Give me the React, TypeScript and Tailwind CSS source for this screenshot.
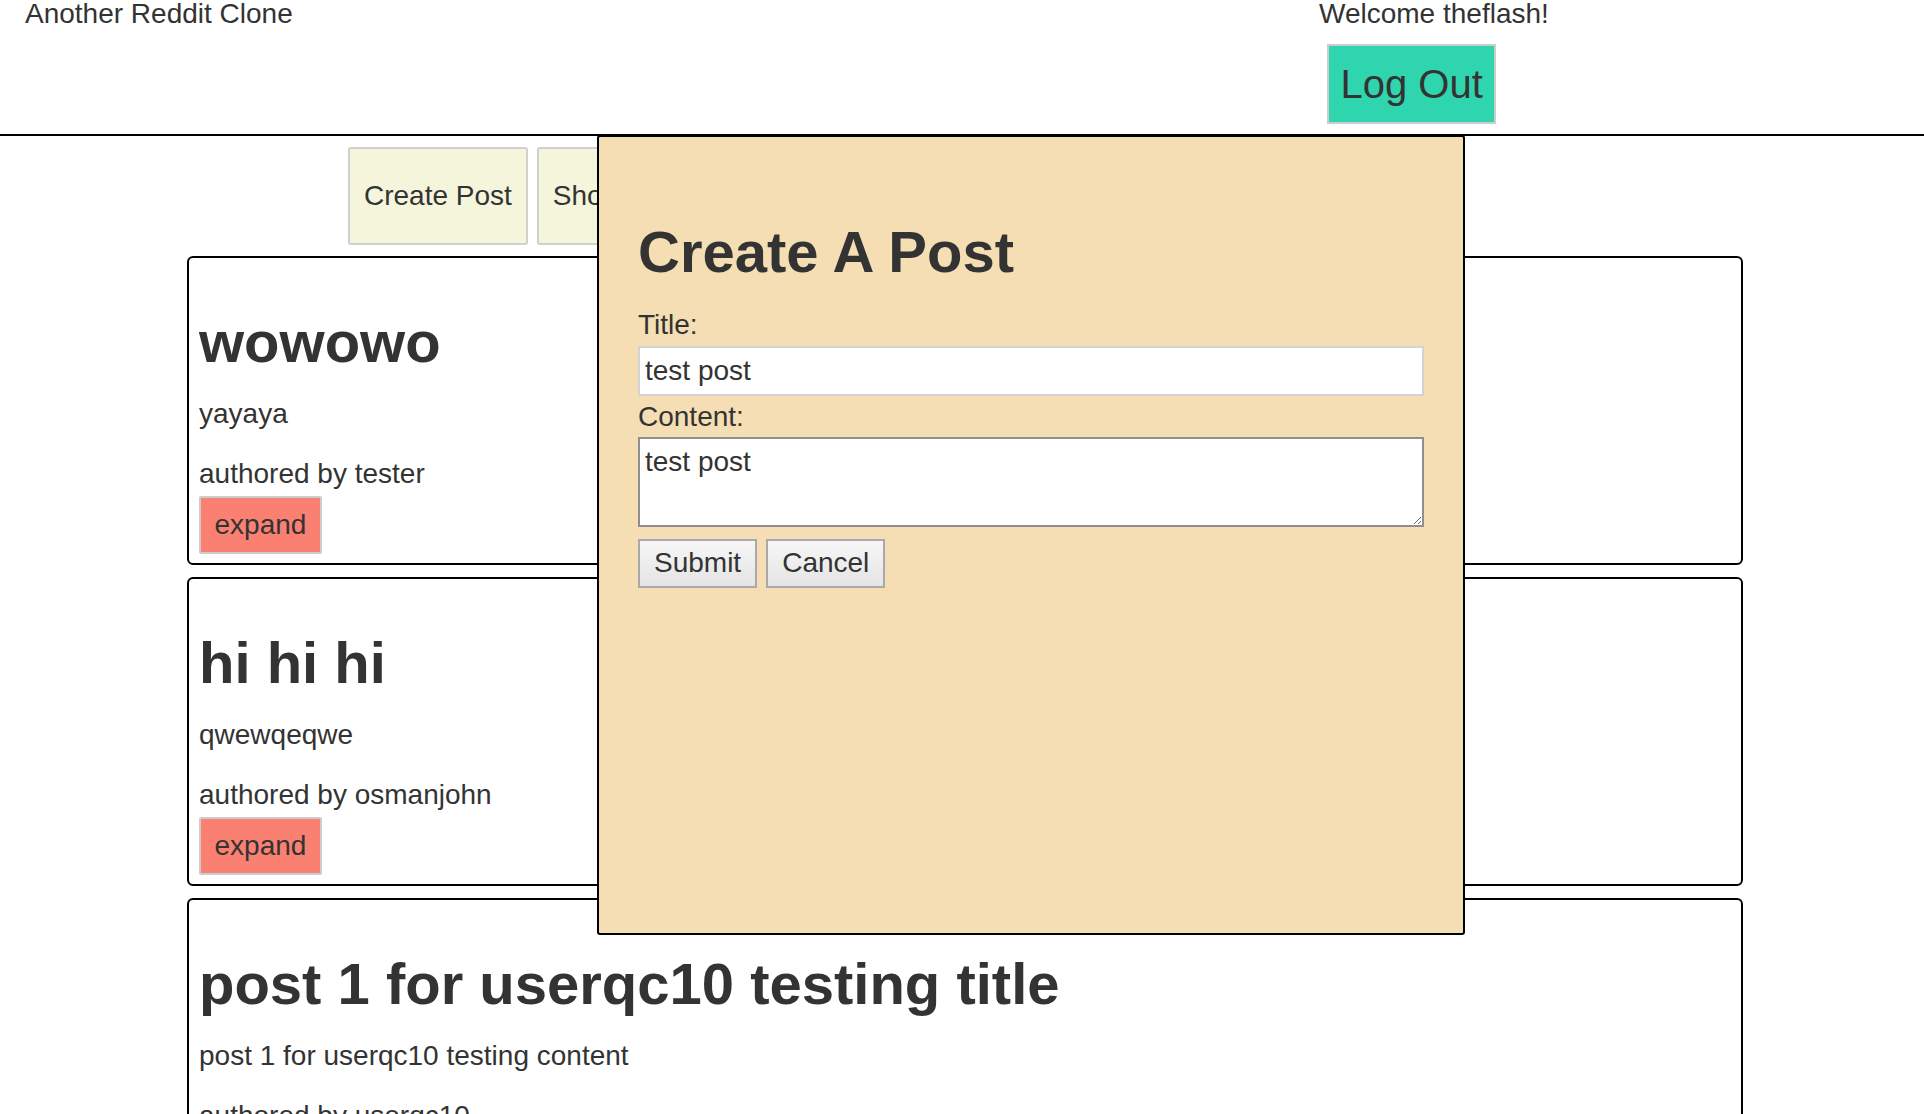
type Post = { title: string; content: string; author: string }

const posts: Post[] = [
  { title: 'wowowo', content: 'yayaya', author: 'tester' },
  { title: 'hi hi hi', content: 'qwewqeqwe', author: 'osmanjohn' },
  {
    title: 'post 1 for userqc10 testing title',
    content: 'post 1 for userqc10 testing content',
    author: 'userqc10',
  },
]

function PostCard({ post }: { post: Post }) {
  return (
    <div className="rounded-[6px] border-2 border-black px-[10px] pt-[10px] pb-[9px]">
      <h1 className="mt-[42px] text-[58px] leading-[64px] font-bold">{post.title}</h1>
      <p className="mt-[24px]">{post.content}</p>
      <p className="mt-[28px]">authored by {post.author}</p>
      <button className="mt-[6px] rounded-[2px] border-2 border-[#cccccc] bg-[#fa8072] px-[13.5px] py-[11px] leading-[32px]">
        expand
      </button>
    </div>
  )
}

export default function App() {
  return (
    <div className="relative flow-root min-h-screen bg-white font-['Liberation_Sans',Arial,sans-serif] text-[28px] leading-[32px] text-[#333333]">
      {/* Header */}
      <header className="-mt-[2px] flex border-b-2 border-black pb-[10px]">
        <div className="flex-1 pl-[25px]">Another Reddit Clone</div>
        <div className="w-[605px]">
          <div>Welcome theflash!</div>
          <button className="mt-[14px] ml-[8px] border-2 border-[#cccccc] bg-[#2fd5ae] px-[11.5px] py-[15px] text-[40px] leading-[46px]">
            Log Out
          </button>
        </div>
      </header>

      {/* Actions */}
      <div className="mt-[11px] ml-[348px] flex gap-[9px]">
        <button className="rounded-[3px] border-2 border-[#d0d0d0] bg-[#f5f5dc] px-[14px] py-[31px] leading-[32px]">
          Create Post
        </button>
        <button className="rounded-[3px] border-2 border-[#d0d0d0] bg-[#f5f5dc] px-[14px] py-[31px] leading-[32px]">
          Show My Posts
        </button>
      </div>

      {/* Posts */}
      <div className="mt-[11px] ml-[187px] flex w-[1556px] flex-col gap-[12px]">
        {posts.map((p) => (
          <PostCard key={p.title} post={p} />
        ))}
      </div>

      {/* Modal */}
      <div className="absolute top-[135px] left-[597px] h-[800px] w-[868px] rounded-[3px] border-2 border-black bg-[#f5deb3] px-[39px] pt-[40px]">
        <h1 className="mt-[43px] text-[58px] leading-[64px] font-bold">Create A Post</h1>
        <label className="mt-[25px] block">Title:</label>
        <input
          className="mt-[5px] block w-full border-2 border-[#d3d3d3] bg-white px-[5px] py-[7px] leading-[32px] outline-none"
          defaultValue="test post"
        />
        <label className="mt-[5px] block">Content:</label>
        <textarea
          className="mt-[4px] block h-[90px] w-full border-2 border-[#8f8f8f] bg-white px-[5px] py-[7px] leading-[32px] outline-none"
          defaultValue="test post"
        />
        <div className="mt-[12px] flex gap-[9px]">
          <button className="border-2 border-[#a9a9a9] bg-linear-to-b from-[#f7f7f7] to-[#e4e4e4] px-[14px] pt-[5px] pb-[7px] leading-[33px]">
            Submit
          </button>
          <button className="border-2 border-[#a9a9a9] bg-linear-to-b from-[#f7f7f7] to-[#e4e4e4] px-[14px] pt-[5px] pb-[7px] leading-[33px]">
            Cancel
          </button>
        </div>
      </div>
    </div>
  )
}
